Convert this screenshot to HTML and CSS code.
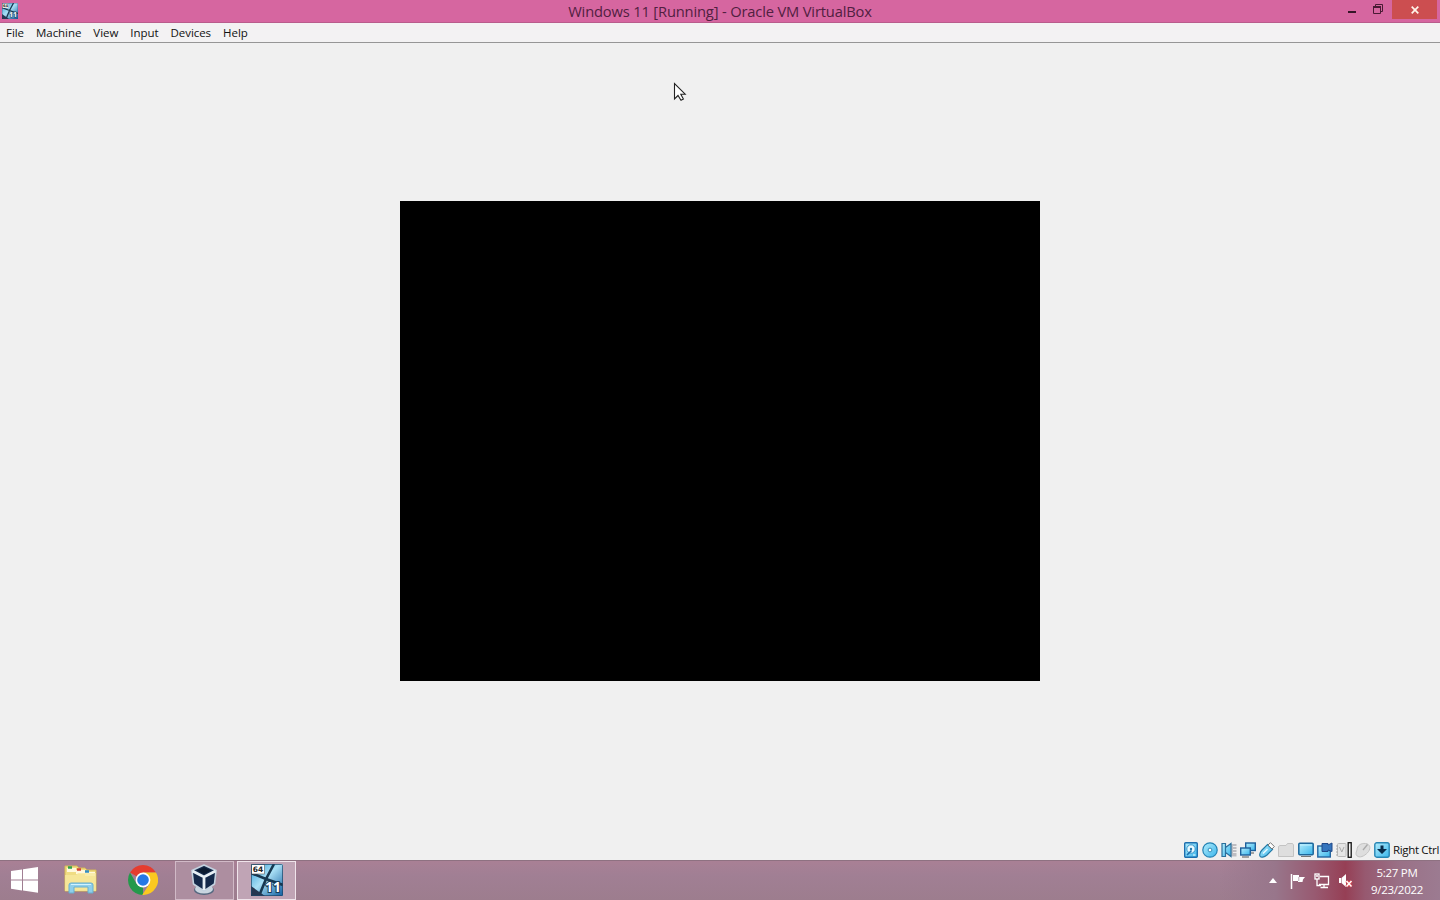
FILE: index.html
```
<!DOCTYPE html>
<html lang="en">
<head>
    <meta charset="UTF-8">
    <title>Windows 11 [Running] - Oracle VM VirtualBox</title>
    <link rel="stylesheet" href="styles.css">
</head>
<body>
    <!-- shared artwork: Windows 11 machine icon and status bar gradient -->
    <svg class="defs" width="0" height="0">
        <defs>
            <linearGradient id="blue" x1="0" y1="0" x2="1" y2="1">
                <stop offset="0" stop-color="#b5edfc"/>
                <stop offset="1" stop-color="#38b5ec"/>
            </linearGradient>
            <linearGradient id="glass" x1="0" y1="0" x2="1" y2="1">
                <stop offset="0" stop-color="#2f9ad4"/>
                <stop offset="0.45" stop-color="#a9dff5"/>
                <stop offset="1" stop-color="#0f5da0"/>
            </linearGradient>
            <symbol id="win11" viewBox="0 0 32 32">
                <rect width="32" height="32" rx="1" fill="url(#glass)"/>
                <path d="M23 0L15 15 8 32M0 9L15 15 32 21" fill="none" stroke="#173750" stroke-width="2.6"/>
                <path d="M0 22L14 32H0Z" fill="#263650"/>
                <rect x=".5" y=".5" width="13" height="9.5" fill="#fff" stroke="#555" stroke-width=".6"/>
                <text class="bits" x="1.8" y="8">64</text>
                <text class="version" x="14" y="28">11</text>
                <rect x=".5" y=".5" width="31" height="31" rx="1" fill="none" stroke="#1c4566" stroke-opacity=".7"/>
            </symbol>
        </defs>
    </svg>

    <header class="titlebar">
        <svg class="app-icon" width="16" height="16"><use href="#win11"/></svg>
        <h1>Windows 11 [Running] - Oracle VM VirtualBox</h1>
        <div class="controls">
            <svg class="minimize" width="8" height="13"><path d="M0 12H8" stroke="#351527" stroke-width="2"/></svg>
            <svg class="restore" width="10" height="10" fill="none" stroke="#4a1b35"><path d="M2.5 2V.5H9.5V7.5H8M.5 2.5H7.5V9.5H.5Z"/><path d="M0 3H8" stroke-width="2"/></svg>
            <div class="close">
                <svg width="8" height="8"><path d="M.7 .7L7.3 7.3M7.3 .7L.7 7.3" stroke="#fff5ea" stroke-width="1.7"/></svg>
            </div>
        </div>
    </header>

    <nav class="menu">
        <span>File</span>
        <span>Machine</span>
        <span>View</span>
        <span>Input</span>
        <span>Devices</span>
        <span>Help</span>
    </nav>

    <main class="machine">
        <div class="guest"></div>
    </main>

    <footer class="status">
        <!-- hard disk -->
        <svg width="16" height="16"><rect x="1.7" y=".8" width="12.6" height="14.4" rx="1" fill="url(#blue)" stroke="#1d6fae" stroke-width="1.4"/><circle cx="8" cy="7" r="4.2" fill="#e9faff" stroke="#3b95c8"/><circle cx="8" cy="7" r="1.2" fill="#2178ae"/><path d="M4 13L8.5 8.5" stroke="#1d6fae" stroke-width="1.6"/><path d="M10 13H12.5" stroke="#fff"/></svg>
        <!-- optical -->
        <svg width="16" height="16"><circle cx="8" cy="8" r="7.2" fill="url(#blue)" stroke="#2583b4" stroke-width="1.2"/><circle cx="8" cy="8" r="1.9" fill="#fff" stroke="#318eb9"/></svg>
        <!-- audio -->
        <svg width="16" height="16"><rect x="10" y="2" width="5.5" height="12.5" fill="#bdbdc2"/><path d="M12 4.5H16M12 7.5H16M12 10.5H16" stroke="#eee"/><path d="M1 1.5H4.5V14.5H1ZM4.5 5.5L10 1.5V14.5L4.5 10.5Z" fill="url(#blue)" stroke="#2b6f9c" stroke-width="1.2"/></svg>
        <!-- network -->
        <svg width="16" height="16" stroke="#1d5f9b"><rect x="5.7" y="1" width="9.6" height="7.5" fill="url(#blue)" stroke-width="1.4"/><path d="M9 11H14" stroke="#555"/><rect x=".7" y="6" width="9.6" height="7" fill="url(#blue)" stroke-width="1.4"/><path d="M2 15H9" stroke="#555"/></svg>
        <!-- usb -->
        <svg width="16" height="16"><path d="M8.5 2.5L13.5 7.5 8 13C5 15.5 2 15.5 1.2 14.5S.5 10.5 3 8Z" fill="url(#blue)" stroke="#247aa7" stroke-width="1.2"/><path d="M9 3L11.5 .7 15.3 4.5 13 7Z" fill="#fff" stroke="#777"/><path d="M4 11.5L8.5 7" stroke="#eafaff" stroke-width="1.5"/></svg>
        <!-- shared folders -->
        <svg width="16" height="16"><path d="M.5 4.5L2 3.5H8L9.5 1.5H14.5L15.5 3V14.5H.5Z" fill="#dedede" stroke="#c3c3c3"/></svg>
        <!-- display -->
        <svg width="16" height="16"><rect x=".8" y="1.3" width="14.4" height="11.4" rx="1" fill="url(#blue)" stroke="#1d679b" stroke-width="1.5"/><path d="M2 3H14" stroke="#c3f1ff"/><path d="M3 14.5H13" stroke="#777"/></svg>
        <!-- recording -->
        <svg width="16" height="16"><rect x=".8" y="4" width="12.5" height="11" fill="url(#blue)" stroke="#2465a0" stroke-width="1.4"/><path d="M5 1.5H11V3L15 1V9.5L11 8V9.5H5Z" fill="#3474bd" stroke="#214888"/></svg>
        <!-- cpu -->
        <svg width="16" height="16"><rect x="1.5" y="1.5" width="8.5" height="13" rx="1" fill="#e5e5e5" stroke="#bbb"/><path d="M0 4H2M0 7H2M0 10H2M0 13H2M3.5 5L5.8 10 8 5" fill="none" stroke="#aaa"/><rect x="12.2" y=".7" width="3" height="14.6" fill="#f6f6f6" stroke="#111" stroke-width="1.3"/></svg>
        <!-- mouse -->
        <svg width="16" height="16"><path d="M2 8C2 3.5 6 1 10.5 1.5C15 2 16 6 13.5 9.5S6 16 3 14.5S1 10.5 2 8Z" fill="#dedede" stroke="#c3c3c3"/><path d="M8 8L12.5 2.5" stroke="#aaa" stroke-width="1.3"/></svg>
        <!-- keyboard -->
        <svg width="16" height="16"><rect x=".8" y=".8" width="14.4" height="14.4" rx="2" fill="url(#blue)" stroke="#2685b4" stroke-width="1.4"/><path d="M6.5 3.5H9.5V7H13L8 12 3 7H6.5Z" fill="#082b4a"/></svg>
        <span>Right Ctrl</span>
    </footer>

    <div class="taskbar">
        <div class="start">
            <svg width="28" height="26"><path d="M0 4L11 2.4V12.4H0ZM12 2.2L27 0V12.4H12ZM0 13.4H11V23.4L0 21.8ZM12 13.4H27V25.7L12 23.6Z" fill="#fff"/></svg>
        </div>
        <div class="task">
            <svg width="34" height="30">
                <path d="M1 1H13L15 3H21L23 5H32V26H1Z" fill="#f0dc83" stroke="#d4b756"/>
                <path d="M3 3H12V7H3ZM12 5H21V9H12ZM21 7H31V11H21Z" fill="#fff8dc"/>
                <path d="M4 2.5H8" stroke="#30a04c" stroke-width="2.5"/><path d="M13 4.5H17" stroke="#d44436" stroke-width="2.5"/><path d="M21 6.5H25" stroke="#328cc1" stroke-width="2.5"/>
                <path d="M1 10H12L14 8H32V26H1Z" fill="#f7e99d" opacity=".8"/>
                <path d="M5 28V20Q5 18 7 18H27Q29 18 29 20V28H24V22H10V28Z" fill="#8fcfea" stroke="#66afd0"/>
                <path d="M7 19.5H27" stroke="#d0f3ff"/>
            </svg>
        </div>
        <div class="task">
            <svg width="30" height="30" viewBox="0 0 30 30">
                <path d="M15 15L2.01 7.5A15 15 0 0 1 27.99 7.5H15Z" fill="#e53c2f"/>
                <path d="M2.01 7.5L8.5 18.75L15 22L15 30A15 15 0 0 1 2.01 7.5Z" fill="#24994b"/>
                <path d="M15 7.5H27.99A15 15 0 0 1 14.2 29.98L21.5 18.75Z" fill="#fbc920"/>
                <circle cx="15" cy="15" r="7.4" fill="#fff"/><circle cx="15" cy="15" r="5.8" fill="#2678e5"/>
            </svg>
        </div>
        <div class="task open">
            <svg class="vbox" width="28" height="32">
                <ellipse cx="14" cy="26" rx="10" ry="5" fill="#53677f"/><ellipse cx="14" cy="25" rx="9" ry="4.5" fill="#c9d5df"/>
                <path d="M14 1L26 6.5L24.5 20L14 27 3.5 20L2 6.5Z" fill="#14294a" stroke="#c3d2df" stroke-width="1.6" stroke-linejoin="round"/>
                <path d="M2.5 7L14 13 25.5 7M14 13V26" fill="none" stroke="#e7eff5" stroke-width="2.8"/>
                <path d="M7 6.5L14 3.2 21 6.5 14 10Z" fill="#0a1a30"/>
            </svg>
        </div>
        <div class="task open active">
            <svg width="32" height="32"><use href="#win11"/></svg>
        </div>

        <div class="tray">
            <svg class="arrow" width="8" height="5"><path d="M4 0L8 5H0Z" fill="#fff"/></svg>
            <svg class="flag" width="16" height="16"><path d="M1.5 1V16" stroke="#fff" stroke-width="1.5"/><path d="M3 2H9V4H15L13 6.5 12.5 9H8V8H3Z" fill="#fff"/><path d="M8.8 4V8" stroke="#a5869a" stroke-width=".7"/></svg>
            <svg class="net" width="16" height="16" fill="none" stroke="#fff" stroke-width="1.3"><path d="M6 3.5H14.5V11.5H5M10 12V14M6.5 14.5H14"/><rect x="1" y="1" width="4" height="5"/><path d="M3 6V12.5H7M2 3H4"/></svg>
            <svg class="sound" width="16" height="16"><path d="M1 5H3V10H1ZM3.5 5L8 1V14L3.5 10Z" fill="#fff"/><path d="M8.5 8L13.5 13.5M13.5 8L8.5 13.5" stroke="#e04b51" stroke-width="3"/><path d="M8.5 8L13.5 13.5M13.5 8L8.5 13.5" stroke="#fff" stroke-width="1.4"/></svg>
            <div class="clock">
                <div>5:27 PM</div>
                <div>9/23/2022</div>
            </div>
        </div>
    </div>

    <svg class="cursor" width="14" height="20"><path d="M1.5 1.5V17L5 13.5 8 18.3 10.4 17 7.8 12.2H12.2Z" fill="#fff" stroke="#222" stroke-width="1.1"/></svg>
</body>
</html>
```

FILE: styles.css
```
* {
    box-sizing: border-box;
}
body {
    margin: 0;
    width: 1440px;
    height: 900px;
    overflow: hidden;
    display: flex;
    flex-direction: column;
    background: #f0f0f0;
    font-family: "Open Sans", "Noto Sans", sans-serif;
    font-size: 11.5px;
    color: #111;
}
svg {
    display: block;
    flex-shrink: 0;
}
.defs {
    position: absolute;
}
.bits {
    font: bold 7.5px "DejaVu Sans", sans-serif;
    letter-spacing: 0;
    fill: #222;
}
.version {
    font: bold 14px "Noto Sans", sans-serif;
    letter-spacing: 0;
    fill: #fff;
    stroke: #193c58;
    stroke-width: 2px;
    paint-order: stroke;
}

/* window frame */
.titlebar {
    height: 23px;
    display: grid;
    grid-template-columns: 120px 1fr 120px;
    background: #d666a0;
    border-bottom: 1px solid #b95c8c;
}
.app-icon {
    margin: 3px 0 0 2px;
}
.titlebar h1 {
    margin: 0;
    text-align: center;
    font-size: 14.7px;
    font-weight: 400;
    line-height: 23px;
    letter-spacing: -0.16px;
    color: #512040;
    white-space: nowrap;
}
.controls {
    display: flex;
    align-items: flex-start;
}
.minimize {
    margin-left: 28px;
}
.restore {
    margin: 4px 0 0 17px;
}
.close {
    width: 45px;
    height: 19px;
    margin-left: 9px;
    display: flex;
    align-items: center;
    justify-content: center;
    background: #cc4e50;
}
.menu {
    height: 20px;
    display: flex;
    gap: 12px;
    padding-left: 6px;
    line-height: 20px;
    letter-spacing: -0.05px;
    background: #f3f2f3;
    border-bottom: 1px solid #969696;
}
.machine {
    height: 796px;
    display: flex;
    justify-content: center;
    padding-top: 158px;
}
.guest {
    width: 640px;
    height: 480px;
    background: #000;
}
.status {
    height: 21px;
    display: flex;
    align-items: center;
    justify-content: flex-end;
    gap: 3.1px;
    padding-right: 1px;
    letter-spacing: -0.33px;
    white-space: nowrap;
}

/* taskbar */
.taskbar {
    height: 40px;
    display: flex;
    background: linear-gradient(#a98095, #a17f94 35%, #9d7d8e);
    border-top: 1px solid #8e7181;
}
.start {
    width: 51px;
    padding: 6px 0 0 11px;
}
.task {
    width: 59px;
    height: 39px;
    margin-right: 3px;
    padding-bottom: 2px;
    display: flex;
    align-items: center;
    justify-content: center;
}
.open {
    border: 1px solid #d1bac7;
    background: #ad8ea0;
}
.active {
    border-color: #f0e4eb;
    background: #c0a4b5;
}
.vbox {
    margin-right: 2px;
}
.tray {
    margin-left: auto;
    width: 220px;
    display: flex;
    align-items: center;
    color: #fff;
    background: linear-gradient(90deg, transparent, #98768b 25%, #985a71 43%, #963f55 57%, #975970 66%, #9a7187 82%, #9c7b91);
}
.arrow {
    margin-left: 49px;
}
.flag {
    margin-left: 13px;
}
.net {
    margin-left: 8px;
}
.sound {
    margin-left: 8px;
}
.clock {
    width: 70px;
    margin-left: 8px;
    text-align: center;
    line-height: 17px;
    letter-spacing: -0.25px;
}

.cursor {
    position: absolute;
    left: 673px;
    top: 82px;
}
```
